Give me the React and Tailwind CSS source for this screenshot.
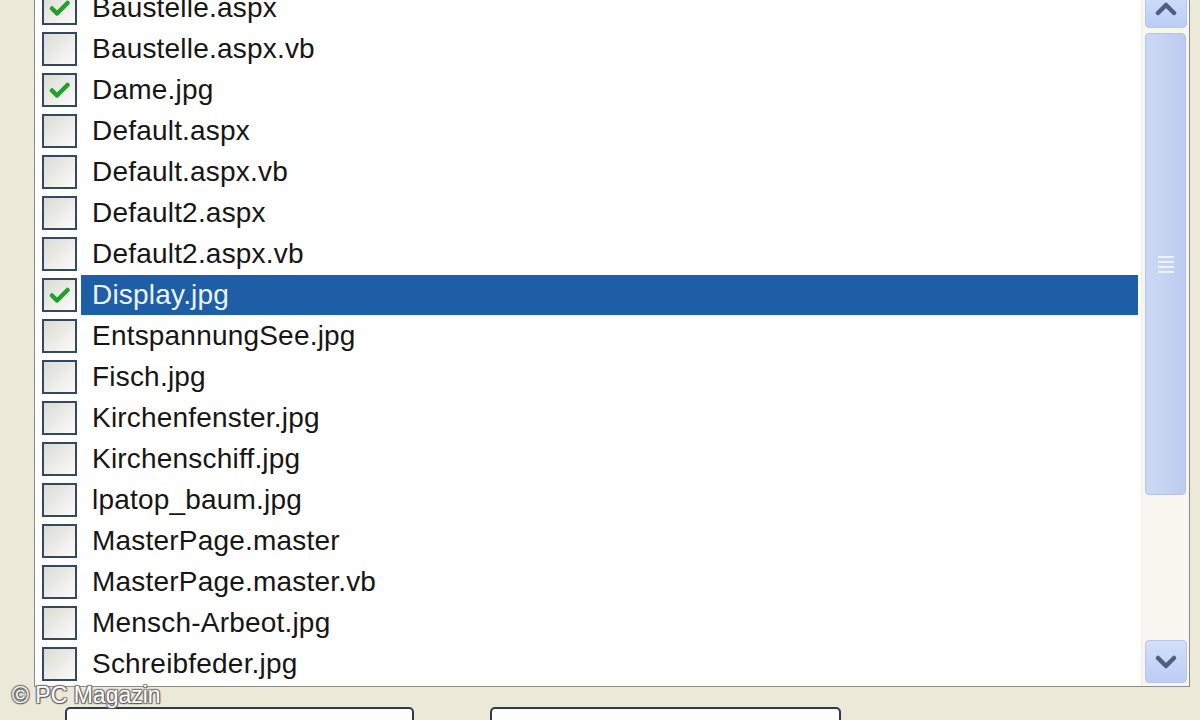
import React from "react";

const items = [
  ["Baustelle.aspx", true],
  ["Baustelle.aspx.vb", false],
  ["Dame.jpg", true],
  ["Default.aspx", false],
  ["Default.aspx.vb", false],
  ["Default2.aspx", false],
  ["Default2.aspx.vb", false],
  ["Display.jpg", true, true],
  ["EntspannungSee.jpg", false],
  ["Fisch.jpg", false],
  ["Kirchenfenster.jpg", false],
  ["Kirchenschiff.jpg", false],
  ["lpatop_baum.jpg", false],
  ["MasterPage.master", false],
  ["MasterPage.master.vb", false],
  ["Mensch-Arbeot.jpg", false],
  ["Schreibfeder.jpg", false],
];

function Check() {
  return (
    <svg width="22" height="20" viewBox="0 0 22 20">
      <path d="M3 10.5 L8 15.5 L18.5 5" fill="none" stroke="#22a02c" strokeWidth="4.5" strokeLinecap="round" strokeLinejoin="round" />
    </svg>
  );
}

function Row({ name, checked, selected }) {
  return (
    <div className="h-[41px] flex items-center pl-[7px] pr-[3px]">
      <div className="w-[35px] h-[34px] shrink-0 border-2 border-[#34495e] bg-gradient-to-br from-[#dcdcd5] to-[#fbfbf9] flex items-center justify-center">
        {checked && <Check />}
      </div>
      <div
        className={
          selected
            ? "ml-[4px] flex-1 h-[40px] flex items-center pl-[11px] bg-[#1d5ea6] text-[#eef3fb]"
            : "ml-[4px] flex-1 h-[40px] flex items-center pl-[11px] text-[#161616]"
        }
      >
        <span className="text-[28px] leading-none tracking-[0.2px]" style={{ fontFamily: '"Liberation Sans", Arial, sans-serif' }}>
          {name}
        </span>
      </div>
    </div>
  );
}

function Chevron({ up }) {
  return (
    <svg width="24" height="16" viewBox="0 0 24 16">
      <path
        d={up ? "M4 13 L12 5 L20 13" : "M4 4 L12 12 L20 4"}
        fill="none"
        stroke="#4a5f82"
        strokeWidth="4.5"
        strokeLinecap="round"
        strokeLinejoin="round"
      />
    </svg>
  );
}

export default function App() {
  return (
    <div className="w-[1200px] h-[720px] bg-[#ece9d8] overflow-hidden relative flex flex-col">
      <div className="ml-[34px] mt-[-15px] w-[1156px] h-[702px] border border-[#8c8c88] bg-white flex shrink-0">
        <div className="flex-1 pt-[1px] overflow-hidden">
          {items.map(([n, c, s]) => (
            <Row key={n} name={n} checked={c} selected={s} />
          ))}
        </div>
        <div className="w-[48px] h-full bg-[#f8f6ee] border-l border-[#eeede6] flex flex-col items-center pt-[2px] pb-[3px] px-[2px]">
          <div className="w-[42px] h-[40px] rounded-[4px] border border-[#b7c7ee] bg-gradient-to-b from-[#d4e0fa] to-[#bccdf4] flex items-center justify-center">
            <Chevron up />
          </div>
          <div className="mt-[5px] w-[41px] h-[462px] rounded-[4px] border border-[#b3c4ec] bg-gradient-to-r from-[#cbd8f4] via-[#c6d4f3] to-[#bccbee] flex items-center justify-center">
            <div className="flex flex-col gap-[3px]">
              <div className="w-[16px] h-[2px] bg-[#eef2fc]" />
              <div className="w-[16px] h-[2px] bg-[#eef2fc]" />
              <div className="w-[16px] h-[2px] bg-[#eef2fc]" />
              <div className="w-[16px] h-[2px] bg-[#eef2fc]" />
            </div>
          </div>
          <div className="flex-1" />
          <div className="w-[42px] h-[43px] rounded-[4px] border border-[#b7c7ee] bg-gradient-to-b from-[#d4e0fa] to-[#bccdf4] flex items-center justify-center">
            <Chevron />
          </div>
        </div>
      </div>
      <div className="flex mt-[20px] pl-[65px] gap-[76px]">
        <div className="w-[349px] h-[40px] rounded-[5px] border-2 border-[#2d3c4c] bg-white" />
        <div className="w-[351px] h-[40px] rounded-[5px] border-2 border-[#2d3c4c] bg-white" />
      </div>
      <div
        className="absolute left-[12px] top-[684px] text-[23px] leading-none text-white"
        style={{
          fontFamily: '"Liberation Sans", Arial, sans-serif',
          textShadow: "1px 1px 1px #555, -1px -1px 1px #777, 1px -1px 1px #777, -1px 1px 1px #777",
        }}
      >
        © PC Magazin
      </div>
    </div>
  );
}
